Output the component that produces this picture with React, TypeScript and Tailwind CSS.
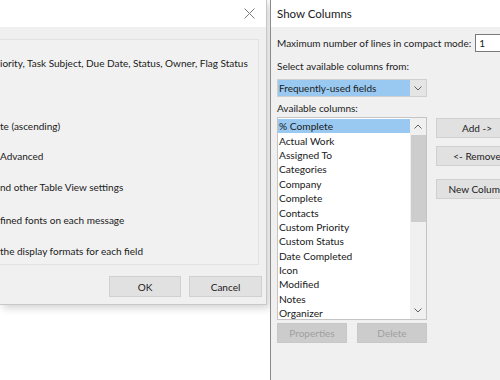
import React from "react";

const font = { fontFamily: 'Lato, "Noto Sans", Arial, sans-serif' };

const items = [
  "% Complete",
  "Actual Work",
  "Assigned To",
  "Categories",
  "Company",
  "Complete",
  "Contacts",
  "Custom Priority",
  "Custom Status",
  "Date Completed",
  "Icon",
  "Modified",
  "Notes",
  "Organizer",
];

function Chevron({ up }: { up?: boolean }) {
  return (
    <svg width="8" height="5" viewBox="0 0 8 5" className="block">
      <path
        d={up ? "M0.5 4.5 L4 1 L7.5 4.5" : "M0.5 0.5 L4 4 L7.5 0.5"}
        fill="none"
        stroke="#606060"
        strokeWidth="1"
      />
    </svg>
  );
}

export default function App() {
  return (
    <div
      className="w-[500px] h-[380px] bg-white flex overflow-hidden text-[10px] text-[#202020] leading-[16px]"
      style={font}
    >
      {/* Left dialog */}
      <div className="w-[270px] h-[380px] shrink-0 bg-white">
        <div className="w-[267px] h-[305px] flex flex-col border-r border-b border-[#c8c8c8] shadow-[3px_3px_8px_rgba(0,0,0,0.18)]">
          <div className="h-[27px] bg-white flex items-center justify-end pr-[11px] shrink-0">
            <svg width="11" height="11" viewBox="0 0 11 11">
              <path d="M0.5 0.5 L10.5 10.5 M10.5 0.5 L0.5 10.5" stroke="#7a7a7a" strokeWidth="1" />
            </svg>
          </div>
          <div className="flex-1 bg-[#f0f0f0] flex flex-col">
            <div className="mt-[12px] mr-[7px] h-[226px] border-t border-r border-b border-[#e2e2e2] bg-[#f1f1f1] flex flex-col">
              <div className="mt-[15px] whitespace-nowrap">iority, Task Subject, Due Date, Status, Owner, Flag Status</div>
              <div className="mt-[47px] whitespace-nowrap">te (ascending)</div>
              <div className="mt-[14px] whitespace-nowrap">Advanced</div>
              <div className="mt-[15px] whitespace-nowrap">nd other Table View settings</div>
              <div className="mt-[17px] whitespace-nowrap">fined fonts on each message</div>
              <div className="mt-[15px] whitespace-nowrap">the display formats for each field</div>
            </div>
            <div className="flex justify-end gap-[8px] mt-[11px] pr-[4px]">
              <div className="w-[72px] h-[21px] bg-[#e1e1e1] border border-[#d0d0d0] flex items-center justify-center">OK</div>
              <div className="w-[73px] h-[21px] bg-[#e1e1e1] border border-[#d0d0d0] flex items-center justify-center">Cancel</div>
            </div>
          </div>
        </div>
      </div>

      {/* Right dialog */}
      <div className="flex-1 h-[380px] flex flex-col border-l border-[#8a8a8a] min-w-0 overflow-hidden">
        <div className="h-[27px] bg-white shrink-0 flex items-center pl-[6px] text-[11.5px]">Show Columns</div>
        <div className="flex-1 bg-[#f0f0f0] pl-[6px] flex flex-col min-w-0">
          <div className="mt-[7px] h-[18px] flex items-center whitespace-nowrap">
            <span className="shrink-0">Maximum number of lines in compact mode:</span>
            <div className="ml-[4px] h-[18px] w-[40px] shrink-0 bg-white border border-[#7a7a7a] flex items-center pl-[3px]">1</div>
          </div>
          <div className="mt-[6px] whitespace-nowrap">Select available columns from:</div>
          <div className="mt-[5px] w-[150px] h-[18px] shrink-0 flex border border-[#cfcfcf] bg-[#e5e5e5]">
            <div className="flex-1 bg-[#99c9f0] flex items-center pl-[1px] leading-[14px]">Frequently-used fields</div>
            <div className="w-[16px] flex items-center justify-center">
              <Chevron />
            </div>
          </div>
          <div className="mt-[3px] whitespace-nowrap">Available columns:</div>
          <div className="mt-[1px] flex items-start">
            <div className="w-[150px] h-[203px] shrink-0 bg-white border border-[#c4c4c4] flex">
              <div className="flex-1 pt-[1px] overflow-hidden">
                {items.map((it, i) => (
                  <div
                    key={it}
                    className={
                      "h-[14.4px] flex items-center pl-[1px] whitespace-nowrap leading-[14px] text-[10.2px] " +
                      (i === 0 ? "bg-[#99c9f0]" : "")
                    }
                  >
                    {it}
                  </div>
                ))}
              </div>
              <div className="w-[16px] bg-[#f0f0f0] flex flex-col items-center">
                <div className="h-[17px] flex items-center justify-center">
                  <Chevron up />
                </div>
                <div className="w-[15px] h-[87px] bg-[#cdcdcd]" />
                <div className="flex-1" />
                <div className="h-[17px] flex items-center justify-center">
                  <Chevron />
                </div>
              </div>
            </div>
            <div className="ml-[9px] flex flex-col shrink-0">
              <div className="mt-[1px] w-[82px] h-[20px] bg-[#e1e1e1] border border-[#d0d0d0] flex items-center justify-center whitespace-nowrap">Add -&gt;</div>
              <div className="mt-[8px] w-[82px] h-[20px] bg-[#e1e1e1] border border-[#d0d0d0] flex items-center justify-center whitespace-nowrap">&lt;- Remove</div>
              <div className="mt-[13px] w-[82px] h-[20px] bg-[#e1e1e1] border border-[#d0d0d0] flex items-center justify-center whitespace-nowrap">New Column</div>
            </div>
          </div>
          <div className="mt-[3px] flex gap-[10px]">
            <div className="w-[70px] h-[20px] shrink-0 bg-[#cccccc] border border-[#c8c8c8] flex items-center justify-center text-[#a0a0a0]">Properties</div>
            <div className="w-[70px] h-[20px] shrink-0 bg-[#cccccc] border border-[#c8c8c8] flex items-center justify-center text-[#a0a0a0]">Delete</div>
          </div>
        </div>
      </div>
    </div>
  );
}
